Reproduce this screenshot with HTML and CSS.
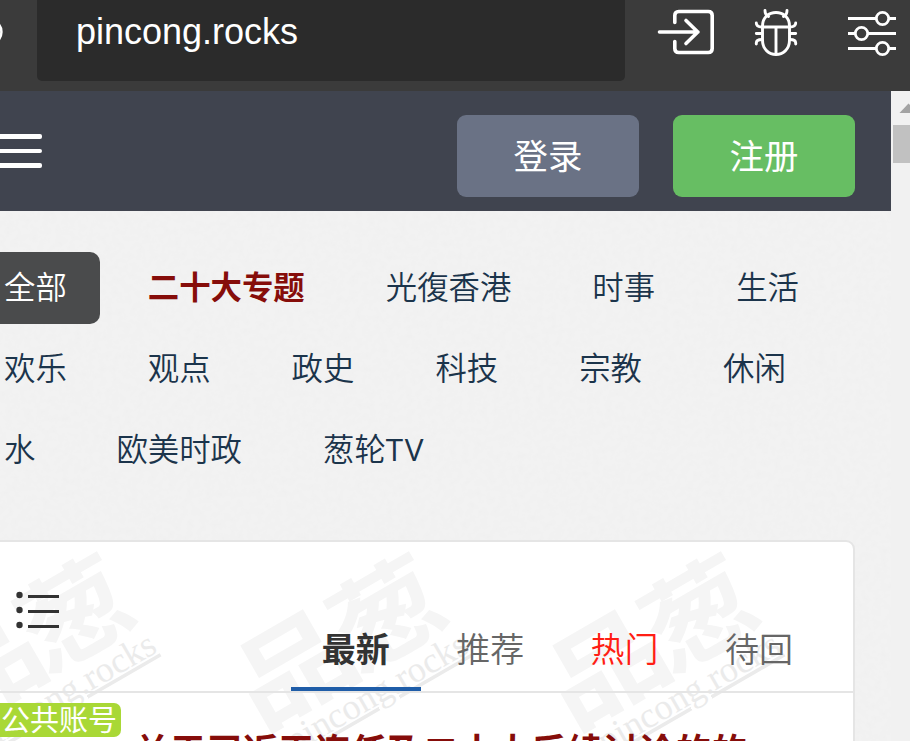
FILE: index.html
```html
<!DOCTYPE html>
<html lang="zh-CN">
<head>
<meta charset="utf-8">
<title>pincong.rocks</title>
<link rel="stylesheet" href="styles.css">
</head>
<body>
<div class="window">
  <header class="toolbar">
    <svg class="reload" width="37" height="81" viewBox="0 0 37 81"><circle cx="-11" cy="32" r="12.4" fill="none" stroke="#fff" stroke-width="2.6"/></svg>
    <div class="address">pincong.rocks</div>
    <svg class="tools" width="285" height="91" viewBox="625 0 285 91" fill="none" stroke="#fff">
      <g stroke-width="3.6" stroke-linecap="round" stroke-linejoin="round">
        <path d="M674.8 22.5V15.5Q674.8 11.5 678.8 11.5H708.2Q712.2 11.5 712.2 15.5V48.5Q712.2 52.5 708.2 52.5H678.8Q674.8 52.5 674.8 48.5V41.5"/>
        <path d="M659.5 32H698M686 20.5L697.8 32L686 43.5"/>
      </g>
      <g stroke-width="2.9" stroke-linecap="round">
        <path d="M762.5 26C762.5 8 789.5 8 789.5 26V40C789.5 59.3 762.5 59.3 762.5 40Z"/>
        <path d="M762.5 27H789.5M776 27V54M765 10.5Q765 15 768.5 16.5M787 10.5Q787 15 783.5 16.5M756.3 23Q756.3 27 762 27M795.7 23Q795.7 27 789.5 27M756.3 33.5H762M790 33.5H795.7M756.3 44V43Q756.3 39.5 762 39.5M795.7 44V43Q795.7 39.5 790 39.5"/>
      </g>
      <g stroke-width="2.8">
        <path d="M848 18.5H876M889 18.5H896M848 33.5H855M868 33.5H896M848 48.5H876M889 48.5H896"/>
        <circle cx="882.5" cy="18.5" r="6.2"/><circle cx="861.5" cy="33.5" r="6.2"/><circle cx="882.5" cy="48.5" r="6.2"/>
      </g>
    </svg>
  </header>
  <div class="viewport">
    <main class="page">
      <svg class="grain" width="100%" height="100%"><filter id="grain"><feTurbulence type="fractalNoise" baseFrequency="0.16" numOctaves="3"/><feColorMatrix values="0 0 0 0 .6  0 0 0 0 .6  0 0 0 0 .6  .1 0 0 0 -.035"/></filter><rect width="100%" height="100%" filter="url(#grain)"/></svg>
      <nav class="navbar">
        <div class="burger"><i></i><i></i><i></i></div>
        <a class="btn login">登录</a>
        <a class="btn register">注册</a>
      </nav>
      <section class="topics">
        <div class="row"><a class="active">全部</a><a class="hot">二十大专题</a><a>光復香港</a><a>时事</a><a>生活</a></div>
        <div class="row"><a>欢乐</a><a>观点</a><a>政史</a><a>科技</a><a>宗教</a><a>休闲</a></div>
        <div class="row"><a>水</a><a>欧美时政</a><a>葱轮<span class="latin">TV</span></a></div>
      </section>
      <section class="card">
        <svg class="watermark" width="853" height="199" viewBox="0 542 853 199">
          <defs><g id="mark"><text class="mark-name" transform="translate(260 730.5) rotate(-30) scale(1.19 1)">品</text><text class="mark-name" transform="translate(357.5 674.5) rotate(-30) scale(1.09 .99)">葱</text><text class="mark-url" transform="translate(294 753.5) rotate(-30)">pincong.rocks</text></g></defs>
          <use href="#mark" x="-312"/><use href="#mark"/><use href="#mark" x="312"/>
        </svg>
        <div class="tabs">
          <svg class="list-icon" width="48" height="44" viewBox="14 588 48 44" fill="#333"><circle cx="19.5" cy="595" r="3.2"/><circle cx="19.5" cy="610" r="3.2"/><circle cx="19.5" cy="625" r="3.2"/><path d="M28 595h31v3H28zM28 610h31v3H28zM28 625h31v3H28z"/></svg>
          <a class="tab current">最新</a><a class="tab">推荐</a><a class="tab popular">热门</a><a class="tab">待回</a>
        </div>
        <div class="post"><span class="badge">公共账号</span><h2>关于习近平连任及二十大后续讨论的的</h2></div>
      </section>
    </main>
    <div class="scrollbar"><svg width="19" height="34" viewBox="0 0 19 34"><path d="M8.5 22L17.5 12.5L26.5 22Z" fill="#a3a3a3"/></svg><div class="thumb"></div></div>
  </div>
</div>
</body>
</html>
```
FILE: styles.css
```css
* { box-sizing: border-box; }
body { margin: 0; font-family: "Noto Sans CJK SC", sans-serif; }
.window { width: 910px; height: 741px; overflow: hidden; display: flex; flex-direction: column; }
.toolbar { height: 91px; flex: none; display: flex; background: #3b3b3b; }
.reload { flex: none; }
.address { width: 588px; height: 81px; padding: 11px 39px 0; background: #2b2b2b; border-radius: 0 0 5px 5px; color: #fff; font: 36px/42px "Liberation Sans", sans-serif; }
.viewport { display: flex; height: 650px; }
.page { position: relative; width: 891px; overflow: hidden; background: #f2f2f2; }
.grain { position: absolute; inset: 0; }
.navbar { position: relative; height: 120px; padding: 24px 36px 0 0; display: flex; gap: 34px; background: #40444f; }
.burger { flex: 1; padding-top: 19px; display: flex; flex-direction: column; gap: 10px; }
.burger i { width: 46px; height: 4.6px; margin-left: -4px; border-radius: 2px; background: #fff; }
.btn { width: 182px; height: 82px; border-radius: 9px; color: #fff; font-size: 34.4px; line-height: 78px; text-align: center; }
.login { background: #6a7285; }
.register { background: #67be63; }
.topics { position: relative; height: 329px; margin-left: -29px; padding-top: 41px; display: flex; flex-direction: column; gap: 9.2px; }
.row { display: flex; gap: 15px; }
.row a { height: 72px; padding: 0 33px; border-radius: 10px; font-size: 31.4px; line-height: 67px; font-weight: 350; color: #1b344b; white-space: nowrap; }
.row .active { background: #4a4b4c; color: #fff; }
.row .hot { color: #860d0a; font-weight: 700; }
.latin { font-family: "Open Sans", sans-serif; font-weight: 400; letter-spacing: 1.6px; }
.card { position: relative; width: 857px; height: 230px; margin-left: -2px; border: 2px solid #e5e5e5; border-radius: 0 9px 0 0; background: #fff; }
.watermark { position: absolute; left: 0; top: 0; }
.mark-name { font-size: 103px; font-weight: 700; fill: #f5f5f5; }
.mark-url { font-family: "Liberation Serif", serif; font-size: 36.2px; fill: #ebebeb; text-decoration: underline; text-decoration-thickness: 3px; }
.tabs { position: relative; height: 151px; padding: 0 29px 0 14px; display: flex; align-items: flex-end; gap: 4.4px; border-bottom: 2px solid #e5e5e5; }
.list-icon { align-self: flex-start; margin: 46px auto 0 0; }
.tab { width: 130px; height: 77px; border-bottom: 4px solid transparent; font-size: 34px; line-height: 68px; font-weight: 350; text-align: center; color: #666; }
.current { font-weight: 700; color: #333; border-color: #1f5da8; }
.popular { color: #ff1e14; }
.post { position: relative; display: flex; padding-top: 10px; }
.badge { width: 127px; height: 34px; margin-left: -6px; padding-left: 7px; border-radius: 7px; background: #a9d836; color: #fff; font-size: 29px; line-height: 31px; white-space: nowrap; }
h2 { margin: 23px 0 0 13px; color: #860d0a; font-size: 36.1px; line-height: 46px; font-weight: 700; white-space: nowrap; }
.scrollbar { width: 19px; background: #f1f1f1; }
.scrollbar svg { display: block; }
.thumb { height: 38px; margin-left: 2px; background: #c1c1c1; }
```
